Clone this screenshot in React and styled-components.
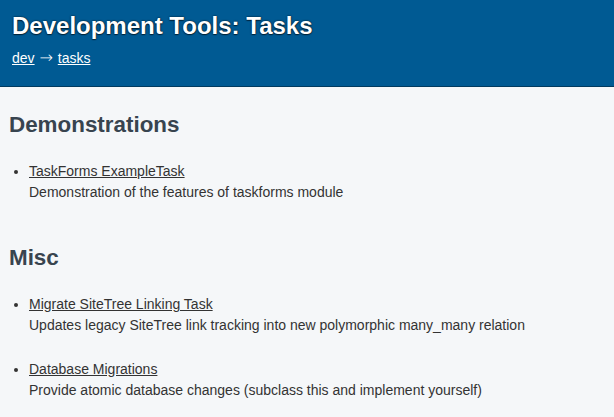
import React from "react";
import styled, { createGlobalStyle } from "styled-components";

const Global = createGlobalStyle`
  html, body { margin: 0; padding: 0; }
  body {
    background: #f5f7f9;
    font-family: "Liberation Sans", Arial, Helvetica, sans-serif;
    color: #333;
    font-size: 14px;
  }
`;

const Header = styled.header`
  background: #005a93;
  color: #fff;
  padding: 12px 12px 17px;
  border-bottom: 1px solid #003b60;
`;

const Title = styled.h1`
  margin: 0;
  font-size: 24px;
  line-height: 28px;
  font-weight: bold;
  text-shadow: 0 0 2px rgba(0, 0, 0, 0.85), 0 1px 1px rgba(0, 0, 0, 0.5);
`;

const Crumbs = styled.div`
  margin-top: 8px;
  font-size: 14px;
  line-height: 21px;
`;

const CrumbLink = styled.a`
  color: #fff;
  text-decoration: underline;
`;

const Arrow = styled.span`
  font-family: "DejaVu Sans ExtraLight", "DejaVu Sans", sans-serif;
  font-weight: 200;
  font-size: 16px;
  line-height: 14px;
  margin: 0 1px;
`;

const Content = styled.main`
  padding: 24px 9px 0;
`;

const Section = styled.section`
  margin-bottom: 41px;
  &:last-child { margin-bottom: 0; }
`;

const Heading = styled.h2`
  margin: 0;
  font-size: 22.4px;
  line-height: 27px;
  font-weight: bold;
  color: #38444f;
`;

const List = styled.ul`
  margin: 23px 0 0;
  padding-left: 20px;
`;

const Item = styled.li`
  margin-bottom: 23px;
  line-height: 21px;
  color: #333;
  &:last-child { margin-bottom: 0; }
`;

const TaskLink = styled.a`
  color: #333;
  text-decoration: underline;
`;

const Desc = styled.div`
  color: #333;
`;

const sections = [
  {
    title: "Demonstrations",
    tasks: [
      {
        name: "TaskForms ExampleTask",
        desc: "Demonstration of the features of taskforms module",
      },
    ],
  },
  {
    title: "Misc",
    tasks: [
      {
        name: "Migrate SiteTree Linking Task",
        desc: "Updates legacy SiteTree link tracking into new polymorphic many_many relation",
      },
      {
        name: "Database Migrations",
        desc: "Provide atomic database changes (subclass this and implement yourself)",
      },
    ],
  },
];

export default function App() {
  return (
    <>
      <Global />
      <Header>
        <Title>Development Tools: Tasks</Title>
        <Crumbs>
          <CrumbLink href="#">dev</CrumbLink> <Arrow>→</Arrow> <CrumbLink href="#">tasks</CrumbLink>
        </Crumbs>
      </Header>
      <Content>
        {sections.map((s) => (
          <Section key={s.title}>
            <Heading>{s.title}</Heading>
            <List>
              {s.tasks.map((t) => (
                <Item key={t.name}>
                  <TaskLink href="#">{t.name}</TaskLink>
                  <Desc>{t.desc}</Desc>
                </Item>
              ))}
            </List>
          </Section>
        ))}
      </Content>
    </>
  );
}
